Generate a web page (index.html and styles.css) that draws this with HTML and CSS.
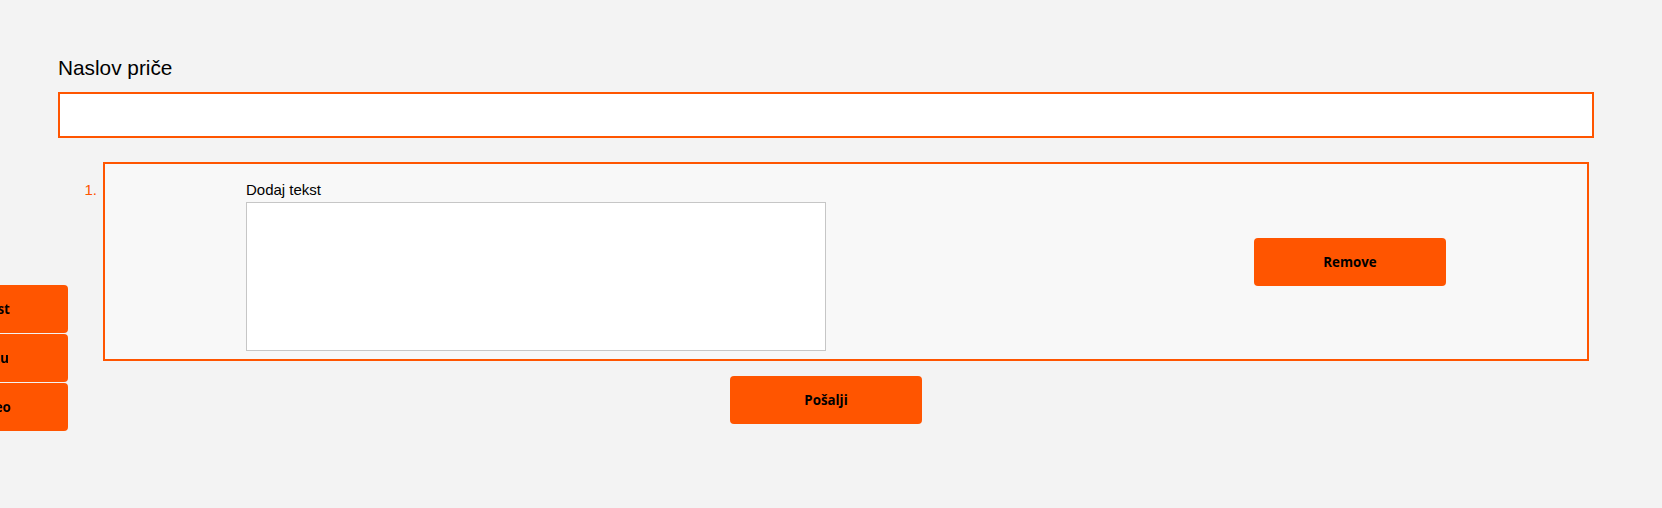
FILE: index.html
```html
<!DOCTYPE html>
<html lang="hr">
<head>
<meta charset="utf-8">
<title>Naslov priče</title>
<link rel="stylesheet" href="styles.css">
</head>
<body>
<div class="toolbar">
  <button class="btn tool-btn" type="button">Dodaj tekst</button>
  <button class="btn tool-btn" type="button">Dodaj sliku</button>
  <button class="btn tool-btn" type="button">Dodaj video</button>
</div>
<main class="page">
  <label class="title-label" for="title">Naslov priče</label>
  <input class="title-input" id="title" type="text">
  <div class="items">
    <div class="item-row">
      <span class="item-num">1.</span>
      <div class="item-box">
        <div class="item-content">
          <label class="field-label" for="t1">Dodaj tekst</label>
          <textarea class="field-text" id="t1" autofocus></textarea>
        </div>
        <button class="btn remove-btn" type="button">Remove</button>
      </div>
    </div>
  </div>
  <div class="actions">
    <button class="btn" type="submit">Pošalji</button>
  </div>
</main>
</body>
</html>
```

FILE: styles.css
```css
html, body {
  margin: 0;
  padding: 0;
}
body {
  background: #f3f3f3;
  font-family: "Liberation Sans", Arial, sans-serif;
  color: #000;
}
.page {
  width: 1536px;
  margin-left: 58px;
  padding-top: 56px;
}
.title-label {
  display: block;
  font-size: 20.8px;
  line-height: 24px;
  margin-bottom: 12px;
}
.title-input {
  display: block;
  box-sizing: border-box;
  width: 1536px;
  height: 46px;
  margin: 0;
  border: 2px solid #ff5500;
  background: #fff;
  outline: none;
}
.items {
  margin-top: 24px;
}
.item-row {
  display: flex;
  align-items: flex-start;
}
.item-num {
  box-sizing: border-box;
  width: 45px;
  padding-top: 19px;
  padding-right: 6px;
  text-align: right;
  color: #ff5500;
  font-size: 15px;
  line-height: 17px;
}
.item-box {
  box-sizing: border-box;
  width: 1486px;
  border: 2px solid #ff5500;
  background: #f8f8f8;
  display: flex;
  align-items: center;
  justify-content: space-between;
  padding: 17px 141px 8px 141px;
}
.item-content {
  display: flex;
  flex-direction: column;
  align-items: flex-start;
}
.field-label {
  font-size: 15px;
  line-height: 17px;
  margin-bottom: 4px;
}
.field-text {
  display: block;
  box-sizing: border-box;
  width: 580px;
  height: 149px;
  margin: 0;
  padding: 2px;
  border: 1px solid #c6c6c6;
  background: #fff;
  resize: none;
  outline: none;
  font-family: "Liberation Sans", Arial, sans-serif;
  font-size: 13px;
}
.btn {
  width: 192px;
  height: 48px;
  border: none;
  border-radius: 4px;
  background: #ff5500;
  color: #000;
  font-family: "Open Sans", "Noto Sans", sans-serif;
  font-weight: 700;
  font-size: 13.3px;
  padding: 0;
  cursor: pointer;
}
.remove-btn {
  margin-bottom: 9px;
}
.actions {
  display: flex;
  justify-content: center;
  margin-top: 15px;
}
.toolbar {
  position: fixed;
  left: -124px;
  top: 285px;
  display: flex;
  flex-direction: column;
  gap: 1px;
}
```
